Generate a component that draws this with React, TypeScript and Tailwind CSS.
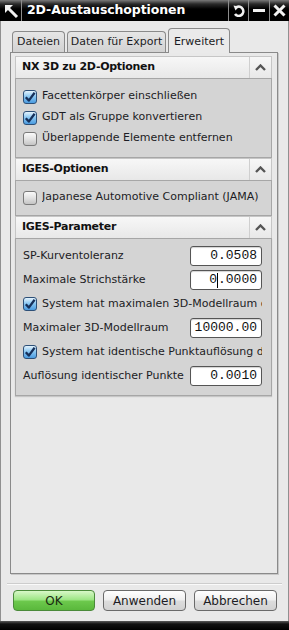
import React from 'react';

const Check = ({ checked }: { checked: boolean }) => (
  <span
    className={`flex-none w-[14px] h-[14px] rounded-[3px] border flex items-center justify-center ${
      checked
        ? 'border-[#2d5078] bg-[linear-gradient(to_bottom,#e4f3fd,#8cc8f2_45%,#4a9be0)]'
        : 'border-[#7a7a7a] bg-[linear-gradient(to_bottom,#fafafa,#e2e2e2_50%,#c4c4c4)]'
    }`}
  >
    {checked && (
      <svg width="12" height="12" viewBox="0 0 12 12">
        <path d="M1.8 6.2 L4.8 9.6 L10.6 1.8" fill="none" stroke="#16305a" strokeWidth="2.3" strokeLinejoin="round" />
      </svg>
    )}
  </span>
);

const CheckRow = ({ checked, label, h = 'h-[21px]' }: { checked: boolean; label: string; h?: string }) => (
  <div className={`${h} flex items-center gap-[5px] pr-[9px] overflow-hidden`}>
    <Check checked={checked} />
    <span className="whitespace-nowrap overflow-hidden">{label}</span>
  </div>
);

const Field = ({ value, caret }: { value: string; caret?: boolean }) => (
  <div className="flex-none w-[72px] h-[20px] rounded-[3px] border border-[#555] bg-white flex items-center justify-end pr-[4px] font-['Liberation_Mono',monospace] text-[13px] text-[#111] shadow-[inset_0_1px_1px_rgba(0,0,0,0.18)]">
    {caret ? (
      <>
        0<span className="w-px h-[15px] bg-black" />.0000
      </>
    ) : (
      value
    )}
  </div>
);

const FieldRow = ({ label, value, caret }: { label: string; value: string; caret?: boolean }) => (
  <div className="h-[24px] flex items-center justify-between pr-[9px]">
    <span className="whitespace-nowrap">{label}</span>
    <Field value={value} caret={caret} />
  </div>
);

const Header = ({ title }: { title: string }) => (
  <div className="h-[22px] flex border-t border-x border-[#c6c6c6] bg-[linear-gradient(to_bottom,#f7f7f7,#e8e8e8)]">
    <div className="flex-1 pl-[6px] flex items-center font-bold tracking-[-0.3px] text-[#111]">{title}</div>
    <div className="w-[22px] border-l border-[#cfcfcf] flex items-center justify-center">
      <svg width="11" height="7" viewBox="0 0 11 7">
        <path d="M1 6 L5.5 1.5 L10 6" fill="none" stroke="#555" strokeWidth="2.4" />
      </svg>
    </div>
  </div>
);

const Body = ({ children, cls }: { children: React.ReactNode; cls: string }) => (
  <div className={`border border-[#a6a6a6] bg-[#d4d4d4] pl-[7px] ${cls}`}>{children}</div>
);

export default function App() {
  return (
    <div className="w-[289px] h-[630px] flex flex-col bg-[#e9e9e9] overflow-hidden font-['DejaVu_Sans',sans-serif] text-[11px] text-[#1c1c24]">
      {/* title bar */}
      <div className="h-[21px] flex-none flex text-white bg-[linear-gradient(to_bottom,#7a7a7a_0px,#2a2a2a_4px,#000_9px,#000_100%)]">
        <div className="w-[21px] flex items-center justify-center">
          <svg width="16" height="16" viewBox="0 0 16 16">
            <polygon points="2,2 10,2 2,10" fill="#f2f2f2" />
            <path d="M4.5 4.5 L14 14" stroke="#f2f2f2" strokeWidth="3" />
          </svg>
        </div>
        <div className="w-px bg-[#8c8c8c]" />
        <div className="flex-1 pl-[5px] flex items-center font-bold text-[12.5px] tracking-[-0.1px]">2D-Austauschoptionen</div>
        <div className="w-px bg-[#8c8c8c]" />
        <div className="w-[19px] flex items-center justify-center">
          <svg width="13" height="13" viewBox="0 0 13 13">
            <path d="M4.5 3.2 A4.6 4.6 0 1 1 3 10" fill="none" stroke="#f2f2f2" strokeWidth="2.6" />
            <polygon points="1.5,1.5 7,2.5 3.5,6.5" fill="#f2f2f2" />
          </svg>
        </div>
        <div className="w-px bg-[#8c8c8c]" />
        <div className="w-[20px] flex items-center justify-center">
          <span className="w-[12px] h-[3px] bg-[#f2f2f2]" />
        </div>
        <div className="w-px bg-[#8c8c8c]" />
        <div className="w-[19px] flex items-center justify-center">
          <svg width="13" height="13" viewBox="0 0 13 13">
            <path d="M1.5 1.5 L11.5 11.5 M11.5 1.5 L1.5 11.5" stroke="#f2f2f2" strokeWidth="3" />
          </svg>
        </div>
      </div>

      <div className="flex-1 flex flex-col border-x border-[#909090] pl-[9px] pr-[10px] pt-[7px]">
        {/* tabs */}
        <div className="h-[24px] flex items-end gap-[1px] pl-[2px]">
          <div className="w-[53px] h-[21px] rounded-t-[4px] border border-b-0 border-[#8a8a8a] bg-[linear-gradient(to_bottom,#e6e6e6,#d2d2d2)] flex items-center justify-center">
            Dateien
          </div>
          <div className="w-[99px] h-[21px] ml-px rounded-t-[4px] border border-b-0 border-[#8a8a8a] bg-[linear-gradient(to_bottom,#e6e6e6,#d2d2d2)] flex items-center justify-center whitespace-nowrap">
            Daten für Export
          </div>
          <div className="relative z-10 w-[62px] h-[25px] -mb-px ml-px rounded-t-[4px] border border-b-0 border-[#8a8a8a] bg-[#eaeaea] flex justify-center pt-[5px]">
            Erweitert
          </div>
        </div>

        {/* panel */}
        <div className="h-[522px] flex-none border border-[#8a8a8a] shadow-[1px_1px_0_#c8c8c8] pt-[3px] pl-[4px] pr-[5px]">
          <Header title="NX 3D zu 2D-Optionen" />
          <Body cls="pt-[7px] pb-[8px]">
            <CheckRow checked label="Facettenkörper einschließen" />
            <CheckRow checked label="GDT als Gruppe konvertieren" />
            <CheckRow checked={false} label="Überlappende Elemente entfernen" />
          </Body>
          <Header title="IGES-Optionen" />
          <Body cls="pt-[6px] pb-[7px]">
            <CheckRow checked={false} label="Japanese Automotive Compliant (JAMA)" />
          </Body>
          <Header title="IGES-Parameter" />
          <Body cls="pt-[5px] pb-[7px] shadow-[0_1px_1px_rgba(0,0,0,0.15)]">
            <FieldRow label="SP-Kurventoleranz" value="0.0508" />
            <FieldRow label="Maximale Strichstärke" value="0.0000" caret />
            <CheckRow checked label="System hat maximalen 3D-Modellraum definiert" h="h-[24px]" />
            <FieldRow label="Maximaler 3D-Modellraum" value="10000.00" />
            <CheckRow checked label="System hat identische Punktauflösung definiert" h="h-[24px]" />
            <FieldRow label="Auflösung identischer Punkte" value="0.0010" />
          </Body>
        </div>

        {/* separator */}
        <div className="mt-[9px] -ml-[3px] -mr-[4px] h-[2px] border-t border-[#cdcdcd] border-b border-b-[#fafafa]" />

        {/* buttons */}
        <div className="mt-[5px] h-[21px] flex gap-[8px] pl-[3px] text-[12px]">
          <div className="w-[82px] rounded-[4px] border border-[#4a8a3a] bg-[linear-gradient(to_bottom,#d8f8c8,#9ee686_45%,#6cc84c_55%,#5ab83c)] flex items-center justify-center text-[#1a2a10]">
            OK
          </div>
          <div className="w-[83px] rounded-[4px] border border-[#6a6a6a] bg-[linear-gradient(to_bottom,#ffffff,#f0f0f0_45%,#dcdcdc_55%,#d2d2d2)] flex items-center justify-center">
            Anwenden
          </div>
          <div className="w-[83px] rounded-[4px] border border-[#6a6a6a] bg-[linear-gradient(to_bottom,#ffffff,#f0f0f0_45%,#dcdcdc_55%,#d2d2d2)] flex items-center justify-center">
            Abbrechen
          </div>
        </div>
      </div>

      {/* bottom bar */}
      <div className="h-[9px] flex-none bg-[linear-gradient(to_bottom,#5a5a5a,#111_3px,#000)]" />
    </div>
  );
}
